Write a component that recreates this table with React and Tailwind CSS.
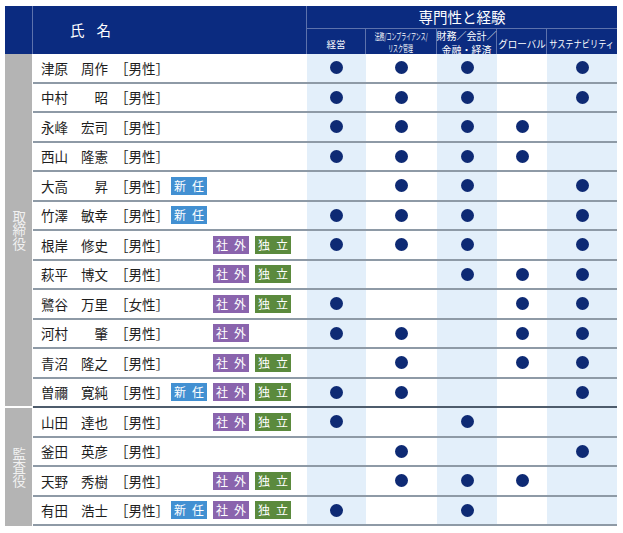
const FONT = { fontFamily: '"Noto Sans CJK JP", "Noto Sans", sans-serif' };

const members = [
  { sei: "津原", mei: "周作", g: "男性", tags: [0, 0, 0], d: [1, 1, 1, 0, 1] },
  { sei: "中村", mei: "昭", g: "男性", tags: [0, 0, 0], d: [1, 1, 1, 0, 1] },
  { sei: "永峰", mei: "宏司", g: "男性", tags: [0, 0, 0], d: [1, 1, 1, 1, 0] },
  { sei: "西山", mei: "隆憲", g: "男性", tags: [0, 0, 0], d: [1, 1, 1, 1, 0] },
  { sei: "大高", mei: "昇", g: "男性", tags: [1, 0, 0], d: [0, 1, 1, 0, 1] },
  { sei: "竹澤", mei: "敏幸", g: "男性", tags: [1, 0, 0], d: [1, 1, 1, 0, 1] },
  { sei: "根岸", mei: "修史", g: "男性", tags: [0, 1, 1], d: [1, 1, 1, 0, 1] },
  { sei: "萩平", mei: "博文", g: "男性", tags: [0, 1, 1], d: [0, 0, 1, 1, 1] },
  { sei: "鷺谷", mei: "万里", g: "女性", tags: [0, 1, 1], d: [1, 0, 0, 1, 1] },
  { sei: "河村", mei: "肇", g: "男性", tags: [0, 1, 0], d: [1, 1, 0, 1, 1] },
  { sei: "青沼", mei: "隆之", g: "男性", tags: [0, 1, 1], d: [0, 1, 0, 1, 1] },
  { sei: "曽禰", mei: "寛純", g: "男性", tags: [1, 1, 1], d: [1, 1, 0, 0, 1] },
  { sei: "山田", mei: "達也", g: "男性", tags: [0, 1, 1], d: [1, 0, 1, 0, 0] },
  { sei: "釜田", mei: "英彦", g: "男性", tags: [0, 0, 0], d: [0, 1, 0, 0, 1] },
  { sei: "天野", mei: "秀樹", g: "男性", tags: [0, 1, 1], d: [0, 1, 1, 1, 0] },
  { sei: "有田", mei: "浩士", g: "男性", tags: [1, 1, 1], d: [1, 0, 1, 0, 0] },
];

// widths + shading of the five skill columns
const cols = [
  { w: "w-[59px]", bg: "bg-[#e3effa]" },
  { w: "w-[71px]", bg: "bg-white" },
  { w: "w-[60px]", bg: "bg-[#e3effa]" },
  { w: "w-[50px]", bg: "bg-white" },
  { w: "w-[70px]", bg: "bg-[#e3effa]" },
];

const tagDefs = [
  { a: "新", b: "任", bg: "bg-[#4290d2]" },
  { a: "社", b: "外", bg: "bg-[#8a64ad]" },
  { a: "独", b: "立", bg: "bg-[#5b8a3d]" },
];

function Tag({ t }) {
  return (
    <div className={`${t.bg} w-[36px] h-[18px] flex items-center justify-center gap-[6px] text-white text-[12px] leading-none`}>
      <span>{t.a}</span>
      <span>{t.b}</span>
    </div>
  );
}

function VText({ text }) {
  return (
    <div className="[writing-mode:vertical-rl] text-[13.5px] leading-none text-[#f1f1f1]">
      {text}
    </div>
  );
}

function Row({ m, last12 }) {
  return (
    <div className={`flex h-[29.5px] border-b-2 ${last12 ? "border-[#4e5c6c]" : "border-[#8e9aa6]"}`}>
      <div className="w-[274px] bg-white flex items-center pl-[8px] text-[13.5px] text-[#1e1e1e]">
        <span className="w-[28px]">{m.sei}</span>
        <span className="w-[39px] text-right">{m.mei}</span>
        <span className="ml-[7px] w-[56px]">［{m.g}］</span>
        <div className="flex gap-[6px]">
          {m.tags.map((on, i) =>
            on ? <Tag key={i} t={tagDefs[i]} /> : <div key={i} className="w-[36px]" />
          )}
        </div>
      </div>
      {cols.map((c, i) => (
        <div key={i} className={`${c.w} ${c.bg} flex items-center justify-center`}>
          {m.d[i] ? <div className="w-[13px] h-[13px] rounded-full bg-[#0e2a74]" /> : null}
        </div>
      ))}
    </div>
  );
}

export default function App() {
  return (
    <div className="w-[623px] h-[533px] bg-white pl-[5px] pt-[6px]" style={FONT}>
      <div className="flex w-[612px]">
        {/* role column */}
        <div className="w-[28px] flex flex-col">
          <div className="h-[48px] bg-[#0b2b80] border-r border-[#5d72ac]" />
          <div className="h-[354px] bg-[#b4b4b4] border-r border-white border-b-2 border-b-white flex items-center justify-center">
            <VText text="取締役" />
          </div>
          <div className="h-[118px] bg-[#b4b4b4] border-r border-white flex items-center justify-center">
            <VText text="監査役" />
          </div>
        </div>

        {/* table */}
        <div className="flex flex-col w-[584px]">
          <div className="flex h-[48px] bg-[#0b2b80] text-white">
            <div className="w-[274px] border-r border-[#5d72ac] flex items-center pl-[37px] gap-[12px] text-[14.5px]">
              <span>氏</span>
              <span>名</span>
            </div>
            <div className="flex-1 flex flex-col">
              <div className="h-[23px] border-b border-[#5d72ac] flex items-center justify-center text-[14.5px]">
                専門性と経験
              </div>
              <div className="flex-1 flex">
                <div className="w-[59px] border-r border-[#5d72ac] flex items-center justify-center text-[9.5px] pt-[1px]">
                  経営
                </div>
                <div className="w-[71px] border-r border-[#5d72ac] flex flex-col items-center justify-center text-[9px] leading-[12px] whitespace-nowrap">
                  <span className="block scale-x-[0.55]">法務/コンプライアンス/</span>
                  <span className="block scale-x-[0.55]">リスク管理</span>
                </div>
                <div className="w-[60px] border-r border-[#5d72ac] flex flex-col items-center justify-center text-[10px] leading-[14.5px] whitespace-nowrap">
                  <span>財務／会計／</span>
                  <span>金融・経済</span>
                </div>
                <div className="w-[50px] border-r border-[#5d72ac] flex items-center justify-center text-[10px] whitespace-nowrap">
                  <span className="block scale-x-[0.95]">グローバル</span>
                </div>
                <div className="w-[70px] flex items-center justify-center text-[10px] whitespace-nowrap">
                  <span className="block scale-x-[0.82]">サステナビリティ</span>
                </div>
              </div>
            </div>
          </div>
          {members.map((m, i) => (
            <Row key={i} m={m} last12={i === 11} />
          ))}
        </div>
      </div>
    </div>
  );
}
